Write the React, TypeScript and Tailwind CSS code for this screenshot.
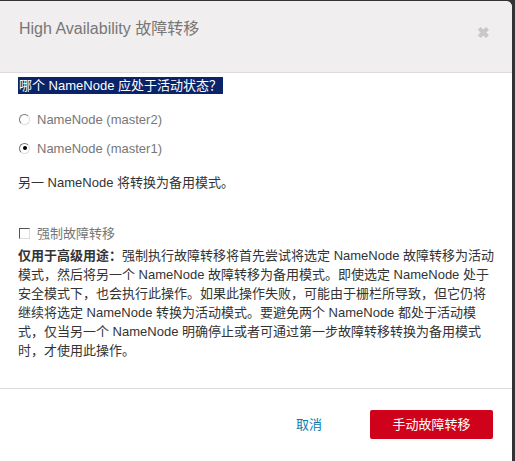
import React, { useState } from "react";

const FONT = { fontFamily: '"Liberation Sans", Arial, "Noto Sans CJK SC", sans-serif' };

export default function App() {
  const [active, setActive] = useState("master1");
  const [force, setForce] = useState(false);

  return (
    <div className="w-[515px] h-[461px] bg-[#333] overflow-hidden pt-px" style={FONT}>
      <div className="w-[512px] h-[460px] bg-white rounded-tr-[6px] flex flex-col">
        {/* Header */}
        <div className="h-[72px] shrink-0 bg-[#f0eeee] border-b border-[#dcdcdc] rounded-tr-[6px] flex items-start justify-between pl-[19px] pr-[22px] pt-[19px]">
          <h2 className="text-[16px] text-[#777] leading-[18px]">High Availability 故障转移</h2>
          <span className="text-[#c8c8c8] text-[15px] font-bold leading-none mt-[5px]">✖</span>
        </div>

        {/* Body */}
        <div className="flex-1 pl-[18px] pr-[16px] text-[13px]">
          <div className="mt-[3px]">
            <span className="bg-[#0a246a] text-white leading-[17px] inline-block px-[1px]">
              哪个 NameNode 应处于活动状态？
            </span>
          </div>

          <div className="mt-[15px] flex flex-col gap-[12px]">
            {[
              { id: "master2", label: "NameNode (master2)" },
              { id: "master1", label: "NameNode (master1)" },
            ].map((o) => (
              <label key={o.id} className="flex items-center gap-[7px] text-[#777] leading-[17px] cursor-pointer">
                <span
                  onClick={() => setActive(o.id)}
                  className="w-[11px] h-[11px] rounded-full border border-t-[#777] border-l-[#777] border-r-[#ddd] border-b-[#ddd] bg-white flex items-center justify-center ml-[1px]"
                >
                  {active === o.id && <span className="w-[4px] h-[4px] rounded-full bg-black" />}
                </span>
                {o.label}
              </label>
            ))}
          </div>

          <p className="mt-[17px] text-[#333] leading-[17px]">另一 NameNode 将转换为备用模式。</p>

          <label className="mt-[34px] flex items-center gap-[7px] text-[#777] leading-[17px] cursor-pointer">
            <span
              onClick={() => setForce(!force)}
              className="w-[11px] h-[11px] border border-t-[#555] border-l-[#555] border-r-[#ddd] border-b-[#ddd] bg-white ml-[1px] flex items-center justify-center text-[9px] leading-none text-black"
            >
              {force ? "✓" : ""}
            </span>
            强制故障转移
          </label>

          <p className="mt-[4px] text-[#333] leading-[19px] w-[478px]">
            <b className="font-bold">仅用于高级用途：</b>
            强制执行故障转移将首先尝试将选定 NameNode 故障转移为活动模式，然后将另一个 NameNode 故障转移为备用模式。即使选定 NameNode 处于安全模式下，也会执行此操作。如果此操作失败，可能由于栅栏所导致，但它仍将继续将选定 NameNode 转换为活动模式。要避免两个 NameNode 都处于活动模式，仅当另一个 NameNode 明确停止或者可通过第一步故障转移转换为备用模式时，才使用此操作。
          </p>
        </div>

        {/* Footer */}
        <div className="h-[73px] shrink-0 border-t border-[#dcdcdc] flex items-center justify-end pr-[19px] gap-[48px] pb-[1px]">
          <button className="text-[13px] text-[#0a7bae] cursor-pointer">取消</button>
          <button className="w-[123px] h-[29px] bg-[#d0021b] text-white text-[13px] rounded-[2px] cursor-pointer">
            手动故障转移
          </button>
        </div>
      </div>
    </div>
  );
}
